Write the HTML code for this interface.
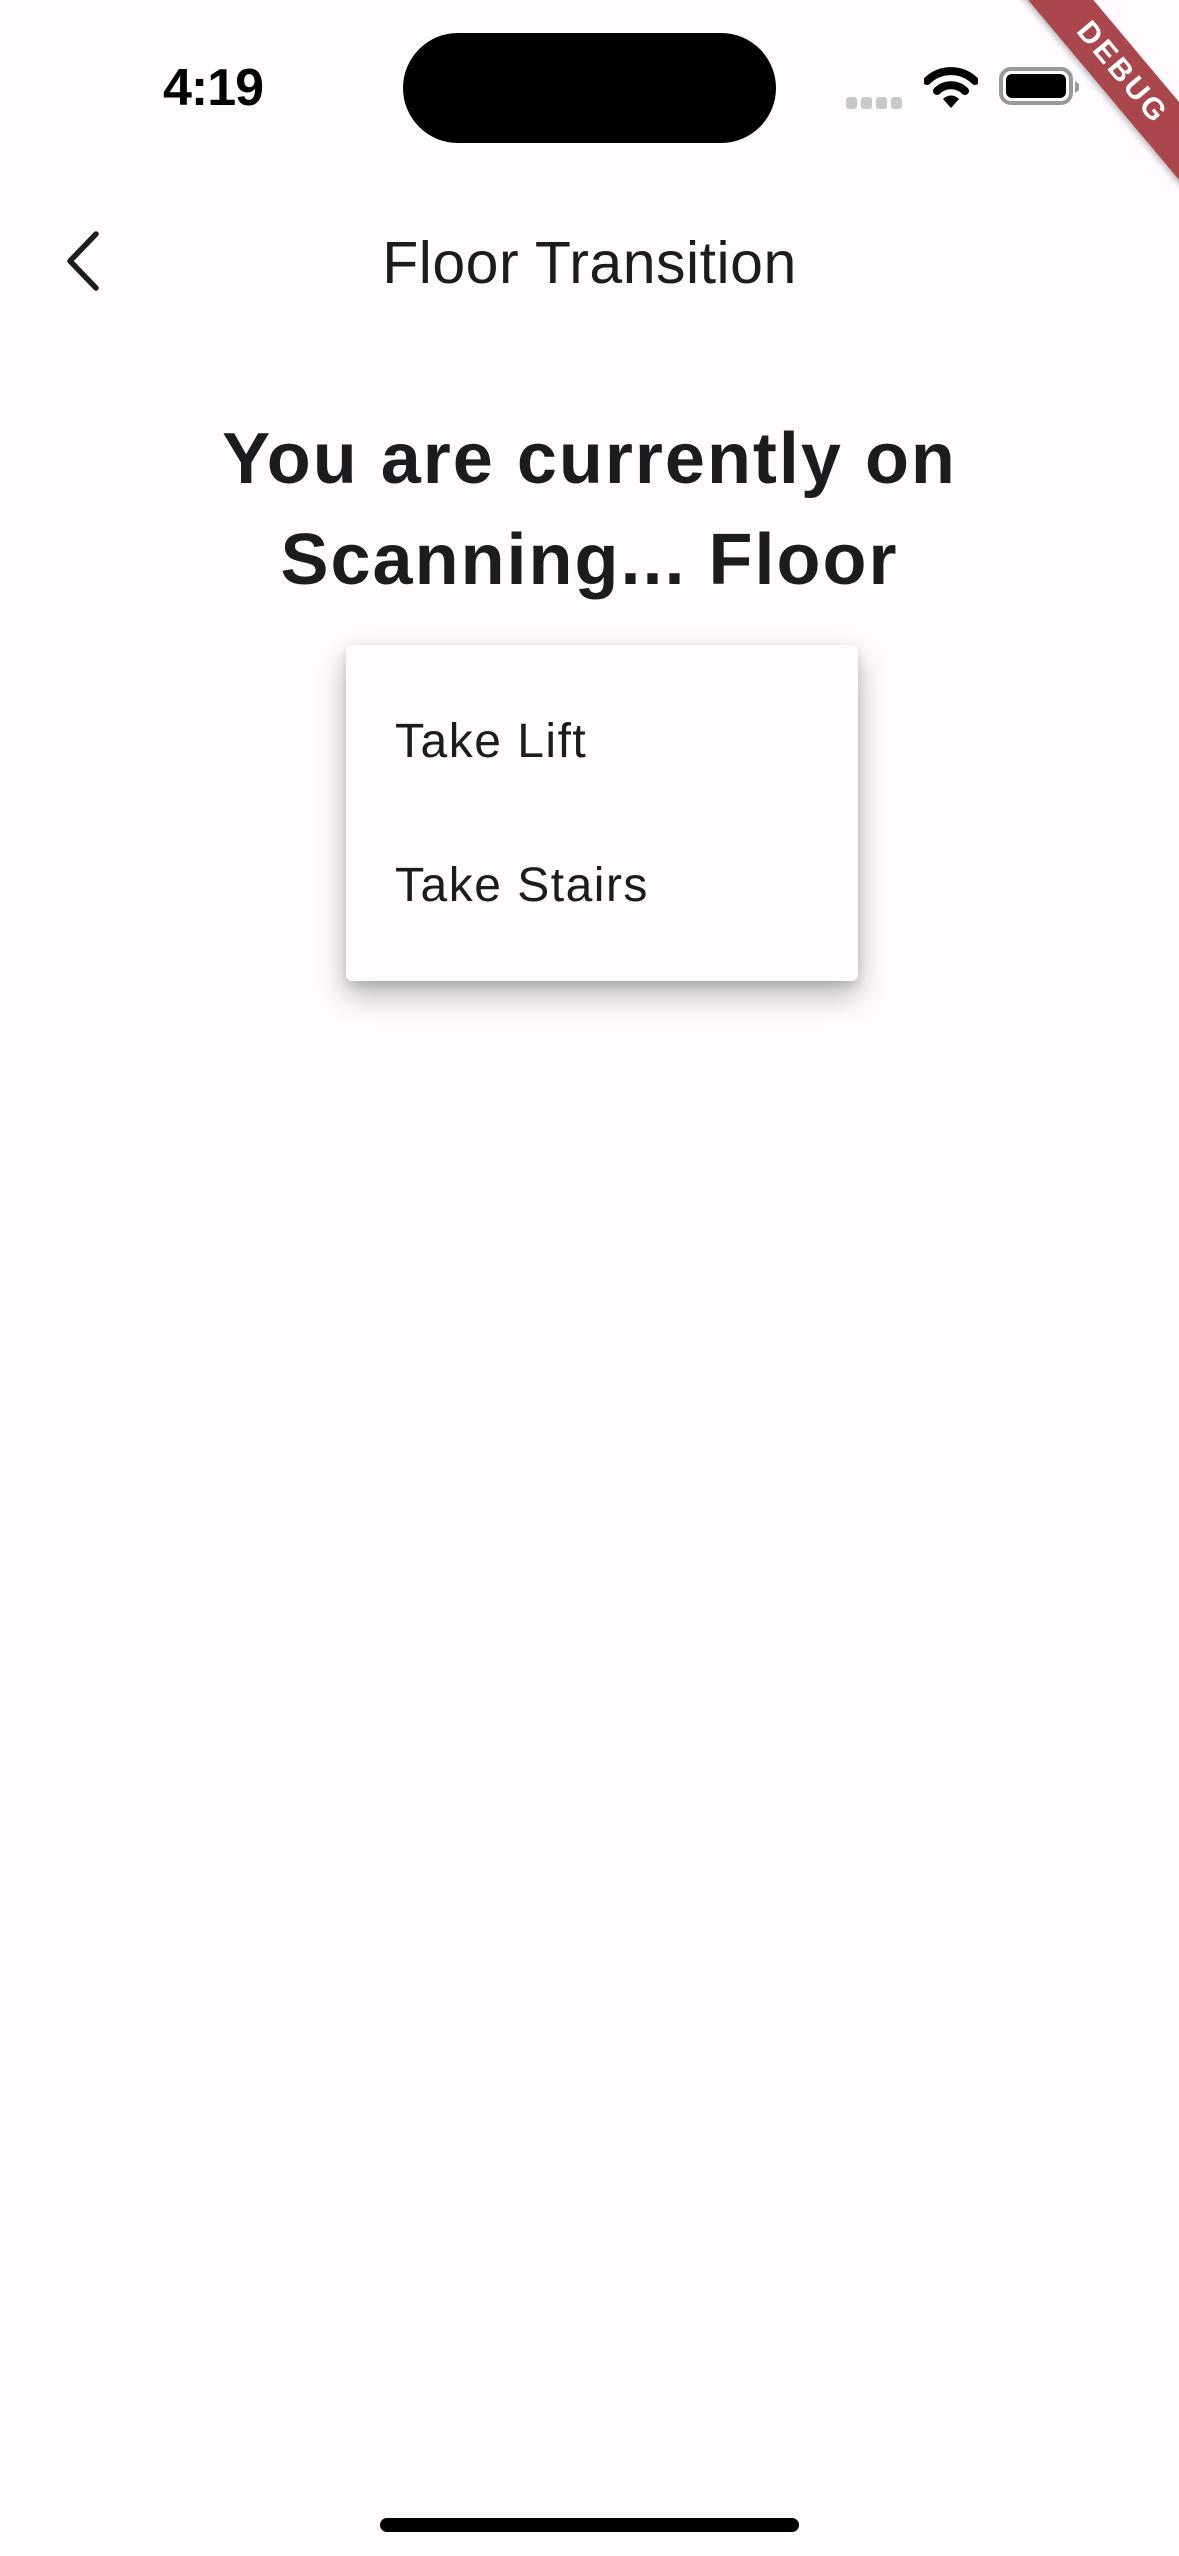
<!DOCTYPE html>
<html><head><meta charset="utf-8"><style>
html,body{margin:0;padding:0;}
body{width:1179px;height:2556px;background:#fffbfe;position:relative;overflow:hidden;font-family:"Liberation Sans",sans-serif;color:#1c1b1f;}
.abs{position:absolute;}
.time{left:163px;top:58px;font-size:52px;font-weight:bold;color:#000;letter-spacing:-1px;}
.island{left:403px;top:33px;width:373px;height:110px;background:#000;border-radius:55px;}
.title{left:0;width:1179px;top:229px;text-align:center;font-size:59px;color:#1c1b1f;letter-spacing:0.5px;}
.h{left:0;width:1179px;text-align:center;font-size:72px;font-weight:bold;color:#1c1b1f;letter-spacing:2px;}
.menu{left:346px;top:645px;width:512px;height:336px;background:#fffbfe;border-radius:6px;box-shadow:0 14px 30px rgba(0,0,0,0.28),0 4px 10px rgba(0,0,0,0.12);}
.item{left:49px;font-size:48px;color:#1c1b1f;letter-spacing:1.5px;}
.banner{left:962px;top:48px;width:320px;height:50px;background:#a9474c;transform:rotate(50deg);color:#fff;font-weight:bold;font-size:30px;text-align:center;line-height:50px;letter-spacing:3px;box-shadow:0 3px 6px rgba(0,0,0,0.25);}
</style></head><body>
<div class="abs time">4:19</div>
<div class="abs island"></div>
<div class="abs" style="left:846px;top:96px;">
<svg width="60" height="12"><rect x="0" y="0" width="11" height="12" rx="3" fill="#c8c8c8"/><rect x="15" y="0" width="11" height="12" rx="3" fill="#c8c8c8"/><rect x="30" y="0" width="11" height="12" rx="3" fill="#c8c8c8"/><rect x="45" y="0" width="11" height="12" rx="3" fill="#c8c8c8"/></svg></div>
<div class="abs" style="left:924px;top:66px;">
<svg width="54" height="44" viewBox="0 0 54 44"><path d="M3 15 A34 34 0 0 1 51 15" stroke="#000" stroke-width="8" fill="none" stroke-linecap="round"/><path d="M13 25 A20 20 0 0 1 41 25" stroke="#000" stroke-width="8" fill="none" stroke-linecap="round"/><path d="M19 33 L27 42 L35 33 A11 11 0 0 0 19 33Z" fill="#000"/></svg></div>
<div class="abs" style="left:998px;top:66px;">
<svg width="84" height="42" viewBox="0 0 84 42"><rect x="3" y="3" width="70" height="34" rx="10" fill="none" stroke="#999" stroke-width="4"/><rect x="8" y="8" width="60" height="24" rx="6" fill="#000"/><path d="M77 15 L81 18 L81 24 L77 27Z" fill="#999"/></svg></div>
<div class="abs banner">DEBUG</div>
<div class="abs" style="left:62px;top:228px;">
<svg width="44" height="66" viewBox="0 0 44 66"><path d="M34 6 L8 33 L34 60" stroke="#1c1b1f" stroke-width="5.5" fill="none" stroke-linecap="round" stroke-linejoin="round"/></svg></div>
<div class="abs title">Floor Transition</div>
<div class="abs h" style="top:418px;">You are currently on</div>
<div class="abs h" style="top:519px;">Scanning... Floor</div>
<div class="abs menu">
<div class="abs item" style="top:69px;">Take Lift</div>
<div class="abs item" style="top:213px;">Take Stairs</div>
</div>
<div class="abs" style="left:380px;top:2518px;width:419px;height:14px;background:#000;border-radius:7px;"></div>
</body></html>
